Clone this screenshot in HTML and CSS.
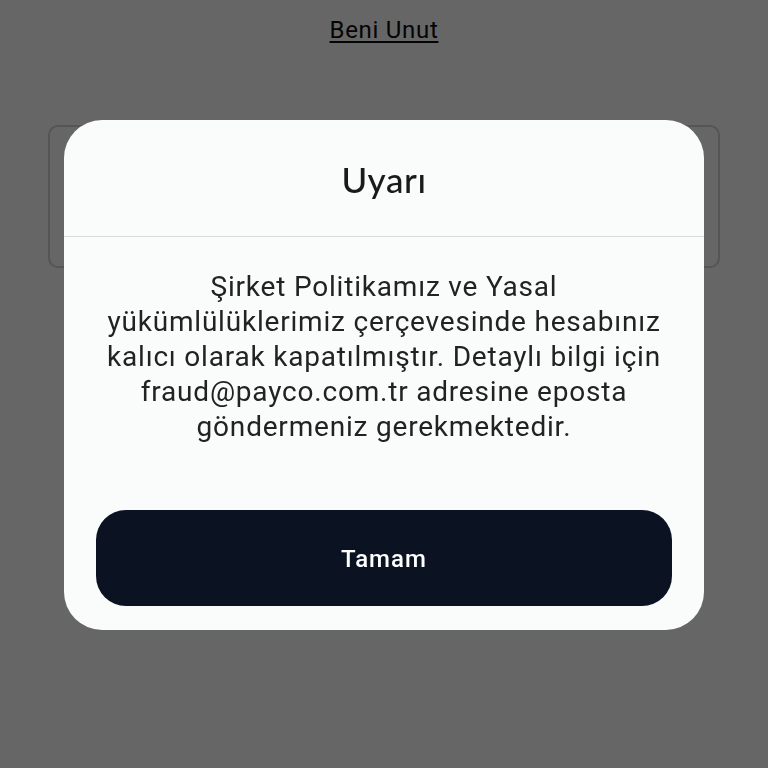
FILE: index.html
```html
<!DOCTYPE html>
<html lang="tr">
<head>
<meta charset="utf-8">
<link rel="stylesheet" href="styles.css">
</head>
<body>
<main class="page">
  <a class="forget" href="#">Beni Unut</a>
  <div class="card"></div>
</main>
<div class="overlay">
  <section class="dialog">
    <header class="dialog-head">
      <h2 class="dialog-title">Uyarı</h2>
    </header>
    <div class="dialog-body">
      <p class="dialog-text">Şirket Politikamız ve Yasal yükümlülüklerimiz çerçevesinde hesabınız kalıcı olarak kapatılmıştır. Detaylı bilgi için fraud@payco.com.tr adresine eposta göndermeniz gerekmektedir.</p>
      <button class="ok-btn" type="button">Tamam</button>
    </div>
  </section>
</div>
</body>
</html>
```
FILE: styles.css
```css
html, body {
  margin: 0;
  padding: 0;
  height: 100%;
  background: #ffffff;
  font-family: Roboto, "Liberation Sans", sans-serif;
}
.page {
  display: flex;
  flex-direction: column;
  align-items: center;
  padding-top: 14px;
}
.forget {
  color: #0a0a0a;
  font-size: 24px;
  line-height: 32px;
  letter-spacing: 0.7px;
  text-decoration: underline;
  text-underline-offset: 3px;
}
.card {
  box-sizing: border-box;
  width: 672px;
  height: 143px;
  margin-top: 79px;
  border: 2px solid #d4d4d4;
  border-radius: 10px;
  background: #fff;
}
.overlay {
  position: fixed;
  inset: 0;
  background: rgba(0, 0, 0, 0.6);
  padding: 120px 64px 0;
}
.dialog {
  background: #fafcfc;
  border-radius: 38px;
  display: flex;
  flex-direction: column;
  height: 510px;
  overflow: hidden;
}
.dialog-head {
  height: 116px;
  border-bottom: 1px solid #d9dbdb;
  display: flex;
  align-items: center;
  justify-content: center;
}
.dialog-title {
  margin: 0;
  font-family: Lato, "Noto Sans", sans-serif;
  font-weight: 500;
  font-size: 35px;
  letter-spacing: 0.6px;
  color: #1a1a1a;
  padding-top: 2px;
}
.dialog-body {
  display: flex;
  flex-direction: column;
  align-items: center;
  padding: 32px 32px 24px;
  flex: 1;
}
.dialog-text {
  margin: 0;
  text-align: center;
  font-size: 28px;
  letter-spacing: 0.8px;
  line-height: 35px;
  color: #222;
}
.ok-btn {
  margin-top: auto;
  width: 100%;
  height: 96px;
  border: none;
  border-radius: 30px;
  background: #0b1322;
  color: #fff;
  font-family: Roboto, "Liberation Sans", sans-serif;
  font-weight: 500;
  font-size: 24px;
  letter-spacing: 1px;
  padding-top: 2px;
}
```
